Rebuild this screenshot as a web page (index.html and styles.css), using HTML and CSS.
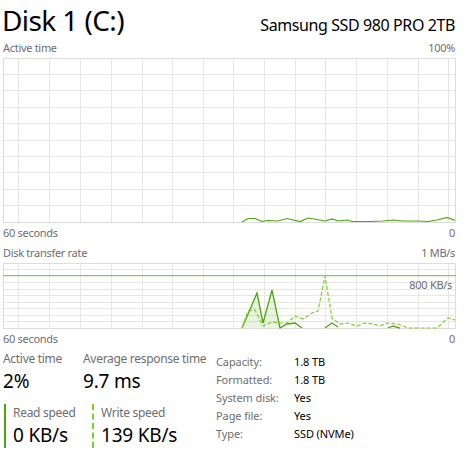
FILE: index.html
```html
<!DOCTYPE html>
<html>
<head>
<meta charset="utf-8">
<link rel="stylesheet" href="styles.css">
</head>
<body>
<div class="page">
  <div class="header">
    <div class="title">Disk 1 (C:)</div>
    <div class="model">Samsung SSD 980 PRO 2TB</div>
  </div>
  <div class="labelrow top1"><span>Active time</span><span>100%</span></div>
  <svg class="chart1" width="453" height="165" viewBox="0 0 453 165">
    <g stroke="#e6e6e6" stroke-width="1">
      <path d="M15.5 0V165M46.5 0V165M77.5 0V165M108.5 0V165M139.5 0V165M169.5 0V165M200.5 0V165M230.5 0V165M261.5 0V165M292.5 0V165M322.5 0V165M353.5 0V165M384.5 0V165M415.5 0V165M445.5 0V165"/>
      <path d="M0 16.5H453M0 32.5H453M0 49.5H453M0 65.5H453M0 82.5H453M0 98.5H453M0 114.5H453M0 131.5H453M0 147.5H453"/>
    </g>
    <rect x="0.5" y="0.5" width="452" height="164" fill="none" stroke="#dcdcdc"/>
    <polyline fill="none" stroke="#4da60c" stroke-width="1.2" points="239,164 245,160.5 252,160.5 259,163.5 264,162.5 275,163 284,160.5 297,163.5 305,160 314,161.5 322,163 329,161 335,163 344,162 349,163.5 355,163.5 367,163.5 380,163 390,162 400,163 414,163 425,163.5 434,162 444,159.5 452,162.5"/>
  </svg>
  <div class="labelrow"><span>60 seconds</span><span>0</span></div>
  <div class="labelrow"><span>Disk transfer rate</span><span>1 MB/s</span></div>
  <div class="chart2wrap">
    <svg class="chart2" width="453" height="66" viewBox="0 0 453 66">
      <g stroke="#e6e6e6" stroke-width="1">
        <path d="M15.5 0V66M46.5 0V66M77.5 0V66M108.5 0V66M139.5 0V66M169.5 0V66M200.5 0V66M230.5 0V66M261.5 0V66M292.5 0V66M322.5 0V66M353.5 0V66M384.5 0V66M415.5 0V66M445.5 0V66"/>
        <path d="M0 6.5H453M0 19.5H453M0 26.5H453M0 32.5H453M0 39.5H453M0 45.5H453M0 52.5H453M0 58.5H453"/>
      </g>
      <rect x="0.5" y="0.5" width="452" height="65" fill="none" stroke="#dcdcdc"/>
      <rect x="0" y="12" width="453" height="1.2" fill="#7fcc52"/>
      <polygon fill="#4da60c" fill-opacity="0.12" points="239,65 254,30 260,60 269,27 277,65"/>
      <polyline fill="none" stroke="#4da60c" stroke-width="1.3" points="239,65 254,30 260,60 269,27 277,65 284,61 292,60 299,65"/>
      <polyline fill="none" stroke="#4da60c" stroke-width="1.3" points="322,65 329,60 335,64"/>
      <polyline fill="none" stroke="#4da60c" stroke-width="1.3" points="385,65 390,63 397,65"/>
      <polyline fill="none" stroke="#7ccf2a" stroke-width="1.2" stroke-dasharray="4 2" points="239,65 245,48 252,47 260,63 269,59 277,60 284,60 292,53 300,56 309,50 315,48 322,13 329,55 337,61 345,60 354,63 362,60 370,61 377,63 384,60 395,61 405,65 434,65 445,55 452,57"/>
    </svg>
    <span class="maxlabel">800 KB/s</span>
  </div>
  <div class="labelrow"><span>60 seconds</span><span>0</span></div>
  <div class="stats">
    <div class="left">
      <div class="pair">
        <div class="stat first">
          <div class="slabel">Active time</div>
          <div class="svalue">2%</div>
        </div>
        <div class="stat second">
          <div class="slabel">Average response time</div>
          <div class="svalue">9.7 ms</div>
        </div>
      </div>
      <div class="pair">
        <div class="stat speed read">
          <div class="slabel">Read speed</div>
          <div class="svalue">0 KB/s</div>
        </div>
        <div class="stat speed write">
          <div class="slabel">Write speed</div>
          <div class="svalue">139 KB/s</div>
        </div>
      </div>
    </div>
    <div class="info">
      <span class="k">Capacity:</span><span class="v">1.8 TB</span>
      <span class="k">Formatted:</span><span class="v">1.8 TB</span>
      <span class="k">System disk:</span><span class="v">Yes</span>
      <span class="k">Page file:</span><span class="v">Yes</span>
      <span class="k">Type:</span><span class="v">SSD (NVMe)</span>
    </div>
  </div>
</div>
</body>
</html>
```
FILE: styles.css
```css
html, body {
  margin: 0;
  padding: 0;
  background: #ffffff;
}
body {
  font-family: "Noto Sans", "Open Sans", sans-serif;
  color: #000;
}
.page {
  width: 453px;
  margin-left: 3px;
  display: flex;
  flex-direction: column;
}
.header {
  display: flex;
  justify-content: space-between;
  align-items: baseline;
  height: 40px;
}
.title {
  font-size: 28px;
  letter-spacing: -0.6px;
  line-height: 40px;
  margin-left: -1px;
}
.model {
  font-size: 16px;
  letter-spacing: -0.4px;
  line-height: 40px;
  margin-right: 1px;
}
.labelrow {
  display: flex;
  justify-content: space-between;
  font-size: 11px;
  letter-spacing: -0.3px;
  line-height: 20px;
  height: 20px;
  color: #6e6e6e;
  padding-right: 1px;
  white-space: nowrap;
}
.labelrow.top1 {
  height: 18px;
  line-height: 16px;
}
svg {
  display: block;
}
.chart2wrap {
  position: relative;
}
.maxlabel {
  position: absolute;
  right: 4px;
  top: 15px;
  font-size: 11px;
  letter-spacing: -0.3px;
  line-height: 14px;
  color: #6e6e6e;
}
.stats {
  display: flex;
  margin-top: 1px;
}
.left {
  display: flex;
  flex-direction: column;
  gap: 10px;
  width: 213px;
}
.pair {
  display: flex;
}
.stat {
  white-space: nowrap;
}
.first {
  width: 80px;
}
.second {
  width: 130px;
}
.slabel {
  font-size: 12px;
  letter-spacing: -0.3px;
  line-height: 18px;
  color: #6e6e6e;
}
.svalue {
  font-size: 19px;
  letter-spacing: -0.2px;
  line-height: 26px;
}
.speed {
  padding-left: 7px;
  border-left: 2px solid #4da60c;
  margin-left: 1px;
}
.read {
  width: 79px;
}
.speed.write {
  border-left: 2px dashed #7ccf2a;
  width: 110px;
  margin-left: 0;
}
.info {
  display: grid;
  grid-template-columns: 78px auto;
  align-content: start;
  font-size: 11px;
  letter-spacing: -0.1px;
  line-height: 18px;
  padding-top: 3px;
}
.info .k {
  color: #6e6e6e;
}
.info .v {
  color: #000;
}
```
